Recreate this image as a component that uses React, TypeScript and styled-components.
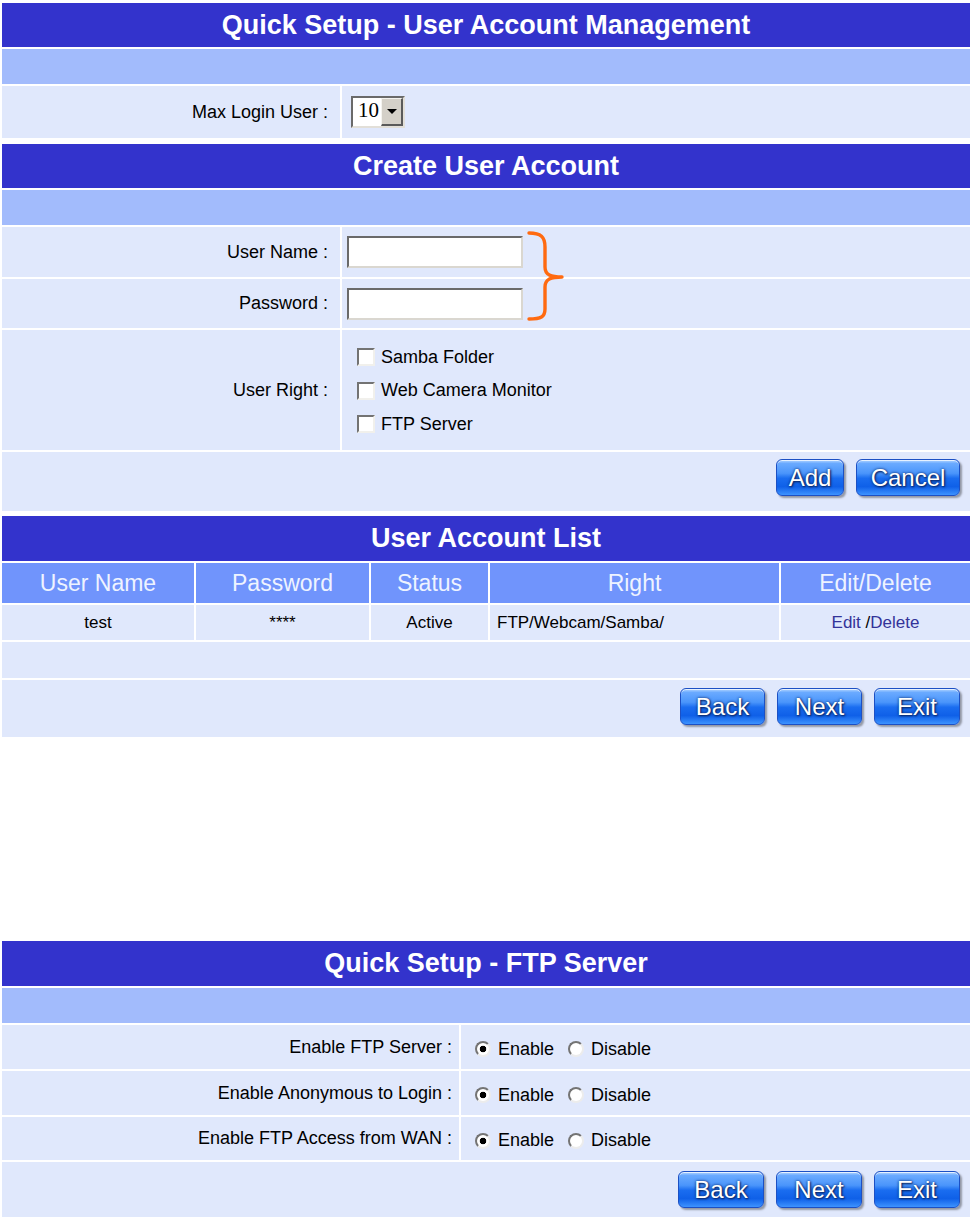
import React from "react";
import styled, { createGlobalStyle } from "styled-components";

const Global = createGlobalStyle`
  html, body { margin: 0; padding: 0; background: #ffffff; }
  body { font-family: "Liberation Sans", Arial, sans-serif; color: #000; }
  * { box-sizing: border-box; }
`;

const C = {
  title: "#3333cc",
  band: "#a2bbfc",
  row: "#e0e8fc",
  head: "#7094fc",
  link: "#333399",
};

const Page = styled.div`
  width: 971px;
  display: flex;
  flex-direction: column;
`;

const Table = styled.section<{ $mt?: number }>`
  position: relative;
  display: flex;
  flex-direction: column;
  gap: 2px;
  padding: 2px 1px 2px 2px;
  margin-top: ${(p) => p.$mt ?? 0}px;
`;

const TitleBar = styled.h2<{ $h: number }>`
  margin: 0;
  height: ${(p) => p.$h}px;
  background: ${C.title};
  color: #ffffff;
  font: bold 27px "Liberation Sans", Arial, sans-serif;
  display: flex;
  align-items: center;
  justify-content: center;
`;

const Band = styled.div`
  height: 35px;
  background: ${C.band};
`;

const Row = styled.div<{ $h: number; $cols: string }>`
  display: grid;
  grid-template-columns: ${(p) => p.$cols};
  gap: 2px;
  height: ${(p) => p.$h}px;
`;

const Label = styled.div<{ $pr: number }>`
  background: ${C.row};
  display: flex;
  align-items: center;
  justify-content: flex-end;
  padding-right: ${(p) => p.$pr}px;
  font-size: 18px;
  white-space: nowrap;
`;

const Value = styled.div<{ $pl: number; $pt?: number }>`
  background: ${C.row};
  display: flex;
  align-items: center;
  padding-left: ${(p) => p.$pl}px;
  padding-top: ${(p) => p.$pt ?? 0}px;
  font-size: 18px;
`;

const EmptyRow = styled.div<{ $h: number }>`
  height: ${(p) => p.$h}px;
  background: ${C.row};
`;

const ActionRow = styled.div<{ $h: number; $pt: number }>`
  height: ${(p) => p.$h}px;
  background: ${C.row};
  display: flex;
  justify-content: flex-end;
  align-items: flex-start;
  gap: 12px;
  padding: ${(p) => p.$pt}px 10px 0 0;
`;

const GlossButton = styled.button<{ $w: number }>`
  width: ${(p) => p.$w}px;
  height: 37px;
  padding: 0;
  border: 1px solid #1c50c4;
  border-radius: 6px;
  background: linear-gradient(
    to bottom,
    #b4d6ff 0%,
    #6aaaff 10%,
    #4a95fb 38%,
    #1a6df0 52%,
    #0f60e8 76%,
    #3d93ff 100%
  );
  color: #ffffff;
  font: 24px "Liberation Sans", Arial, sans-serif;
  text-shadow: 0 0 3px #0a2563, 1px 1px 2px #0a2563;
  box-shadow: 2px 2px 2px rgba(0, 0, 0, 0.35), inset 0 1px 0 rgba(255, 255, 255, 0.7);
  display: flex;
  align-items: center;
  justify-content: center;
  cursor: pointer;
`;

const TextBox = styled.input`
  width: 176px;
  height: 32px;
  border-style: solid;
  border-width: 2px;
  border-color: #6a6a6a #dad7d0 #dad7d0 #6a6a6a;
  background: #ffffff;
  outline: none;
  padding: 2px 4px;
  font: 17px "Liberation Sans", Arial, sans-serif;
`;

const SelectBox = styled.div`
  width: 54px;
  height: 32px;
  border-style: solid;
  border-width: 2px;
  border-color: #6a6a6a #e2dfd8 #e2dfd8 #6a6a6a;
  background: #ffffff;
  display: flex;
  align-items: stretch;
`;

const SelectValue = styled.span`
  flex: 1;
  font: 21px "Liberation Serif", "Times New Roman", serif;
  padding: 1px 0 0 5px;
  line-height: 22px;
`;

const SelectArrow = styled.span`
  width: 22px;
  background: #d4d0c8;
  border-style: solid;
  border-width: 1px 2px 2px 1px;
  border-color: #f4f3ef #5a5a5a #5a5a5a #f4f3ef;
  display: flex;
  align-items: center;
  justify-content: center;
  &::after {
    content: "";
    border-left: 5px solid transparent;
    border-right: 5px solid transparent;
    border-top: 5px solid #000;
  }
`;

const CheckList = styled.div`
  display: flex;
  flex-direction: column;
  padding-top: 1px;
`;

const CheckItem = styled.label`
  height: 33.5px;
  display: flex;
  align-items: center;
  gap: 6px;
  font-size: 18px;
`;

const CheckBox = styled.input.attrs({ type: "checkbox" })`
  appearance: none;
  margin: 0;
  width: 18px;
  height: 18px;
  background: #ffffff;
  border-style: solid;
  border-width: 2px;
  border-color: #737373 #f1f0ec #f1f0ec #737373;
`;

const RadioItem = styled.label<{ $ml?: number }>`
  display: flex;
  align-items: center;
  gap: 7px;
  margin-left: ${(p) => p.$ml ?? 0}px;
  font-size: 18px;
`;

const Radio = styled.input.attrs({ type: "radio" })`
  appearance: none;
  margin: 0;
  width: 16px;
  height: 16px;
  border-radius: 50%;
  border-style: solid;
  border-width: 2px;
  border-color: #747474 #ececec #ececec #747474;
  background: #ffffff;
  &:checked {
    background: radial-gradient(circle, #000 0 3px, #ffffff 3.6px);
  }
`;

const HeadCell = styled.div`
  background: ${C.head};
  color: #eef3ff;
  font-size: 23px;
  display: flex;
  align-items: center;
  justify-content: center;
`;

const DataCell = styled.div<{ $left?: boolean }>`
  background: ${C.row};
  font-size: 17px;
  display: flex;
  align-items: center;
  justify-content: ${(p) => (p.$left ? "flex-start" : "center")};
  padding-left: ${(p) => (p.$left ? 7 : 0)}px;
  white-space: pre;
`;

const Link = styled.a`
  color: ${C.link};
  text-decoration: none;
  cursor: pointer;
`;

const Brace = styled.svg`
  position: absolute;
  left: 527px;
  top: 89px;
  width: 38px;
  height: 92px;
  overflow: visible;
`;

const TOP_COLS = "338px 1fr";
const LIST_COLS = "192px 173px 117px 289px 1fr";
const FTP_COLS = "457px 1fr";

const ftpRows = [
  { label: "Enable FTP Server :", name: "ftp", h: 44 },
  { label: "Enable Anonymous to Login :", name: "anon", h: 44 },
  { label: "Enable FTP Access from WAN :", name: "wan", h: 43 },
];

export default function App() {
  return (
    <Page>
      <Global />

      <Table $mt={1}>
        <TitleBar $h={44}>Quick Setup - User Account Management</TitleBar>
        <Band />
        <Row $h={52} $cols={TOP_COLS}>
          <Label $pr={12}>Max Login User :</Label>
          <Value $pl={9}>
            <SelectBox>
              <SelectValue>10</SelectValue>
              <SelectArrow />
            </SelectBox>
          </Value>
        </Row>
      </Table>

      <Table $mt={2}>
        <TitleBar $h={44}>Create User Account</TitleBar>
        <Band />
        <Row $h={50} $cols={TOP_COLS}>
          <Label $pr={12}>User Name :</Label>
          <Value $pl={5}>
            <TextBox type="text" />
          </Value>
        </Row>
        <Row $h={49} $cols={TOP_COLS}>
          <Label $pr={12}>Password :</Label>
          <Value $pl={5}>
            <TextBox type="password" />
          </Value>
        </Row>
        <Row $h={120} $cols={TOP_COLS}>
          <Label $pr={12}>User Right :</Label>
          <Value $pl={15}>
            <CheckList>
              <CheckItem>
                <CheckBox />
                Samba Folder
              </CheckItem>
              <CheckItem>
                <CheckBox />
                Web Camera Monitor
              </CheckItem>
              <CheckItem>
                <CheckBox />
                FTP Server
              </CheckItem>
            </CheckList>
          </Value>
        </Row>
        <ActionRow $h={59} $pt={7}>
          <GlossButton $w={68}>Add</GlossButton>
          <GlossButton $w={104}>Cancel</GlossButton>
        </ActionRow>
        <Brace viewBox="0 0 38 92">
          <path
            d="M2 2 C 14 2, 18 6, 18 16 L 18 36 C 18 44, 24 46, 35 46 C 24 46, 18 48, 18 56 L 18 78 C 18 86, 14 88, 2 88"
            fill="none"
            stroke="#ff6a10"
            strokeWidth="3.4"
            strokeLinecap="round"
            strokeLinejoin="round"
          />
        </Brace>
      </Table>

      <Table $mt={1}>
        <TitleBar $h={45}>User Account List</TitleBar>
        <Row $h={40} $cols={LIST_COLS}>
          <HeadCell>User Name</HeadCell>
          <HeadCell>Password</HeadCell>
          <HeadCell>Status</HeadCell>
          <HeadCell>Right</HeadCell>
          <HeadCell>Edit/Delete</HeadCell>
        </Row>
        <Row $h={35} $cols={LIST_COLS}>
          <DataCell>test</DataCell>
          <DataCell>****</DataCell>
          <DataCell>Active</DataCell>
          <DataCell $left>FTP/Webcam/Samba/</DataCell>
          <DataCell>
            <span>
              <Link>Edit</Link> /<Link>Delete</Link>
            </span>
          </DataCell>
        </Row>
        <EmptyRow $h={36} />
        <ActionRow $h={57} $pt={8}>
          <GlossButton $w={85}>Back</GlossButton>
          <GlossButton $w={85}>Next</GlossButton>
          <GlossButton $w={86}>Exit</GlossButton>
        </ActionRow>
      </Table>

      <Table $mt={200}>
        <TitleBar $h={45}>Quick Setup - FTP Server</TitleBar>
        <Band />
        {ftpRows.map((r) => (
          <Row key={r.name} $h={r.h} $cols={FTP_COLS}>
            <Label $pr={7}>{r.label}</Label>
            <Value $pl={14} $pt={4}>
              <RadioItem>
                <Radio name={r.name} defaultChecked />
                Enable
              </RadioItem>
              <RadioItem $ml={14}>
                <Radio name={r.name} />
                Disable
              </RadioItem>
            </Value>
          </Row>
        ))}
        <ActionRow $h={60} $pt={9}>
          <GlossButton $w={86}>Back</GlossButton>
          <GlossButton $w={86}>Next</GlossButton>
          <GlossButton $w={86}>Exit</GlossButton>
        </ActionRow>
      </Table>
    </Page>
  );
}
